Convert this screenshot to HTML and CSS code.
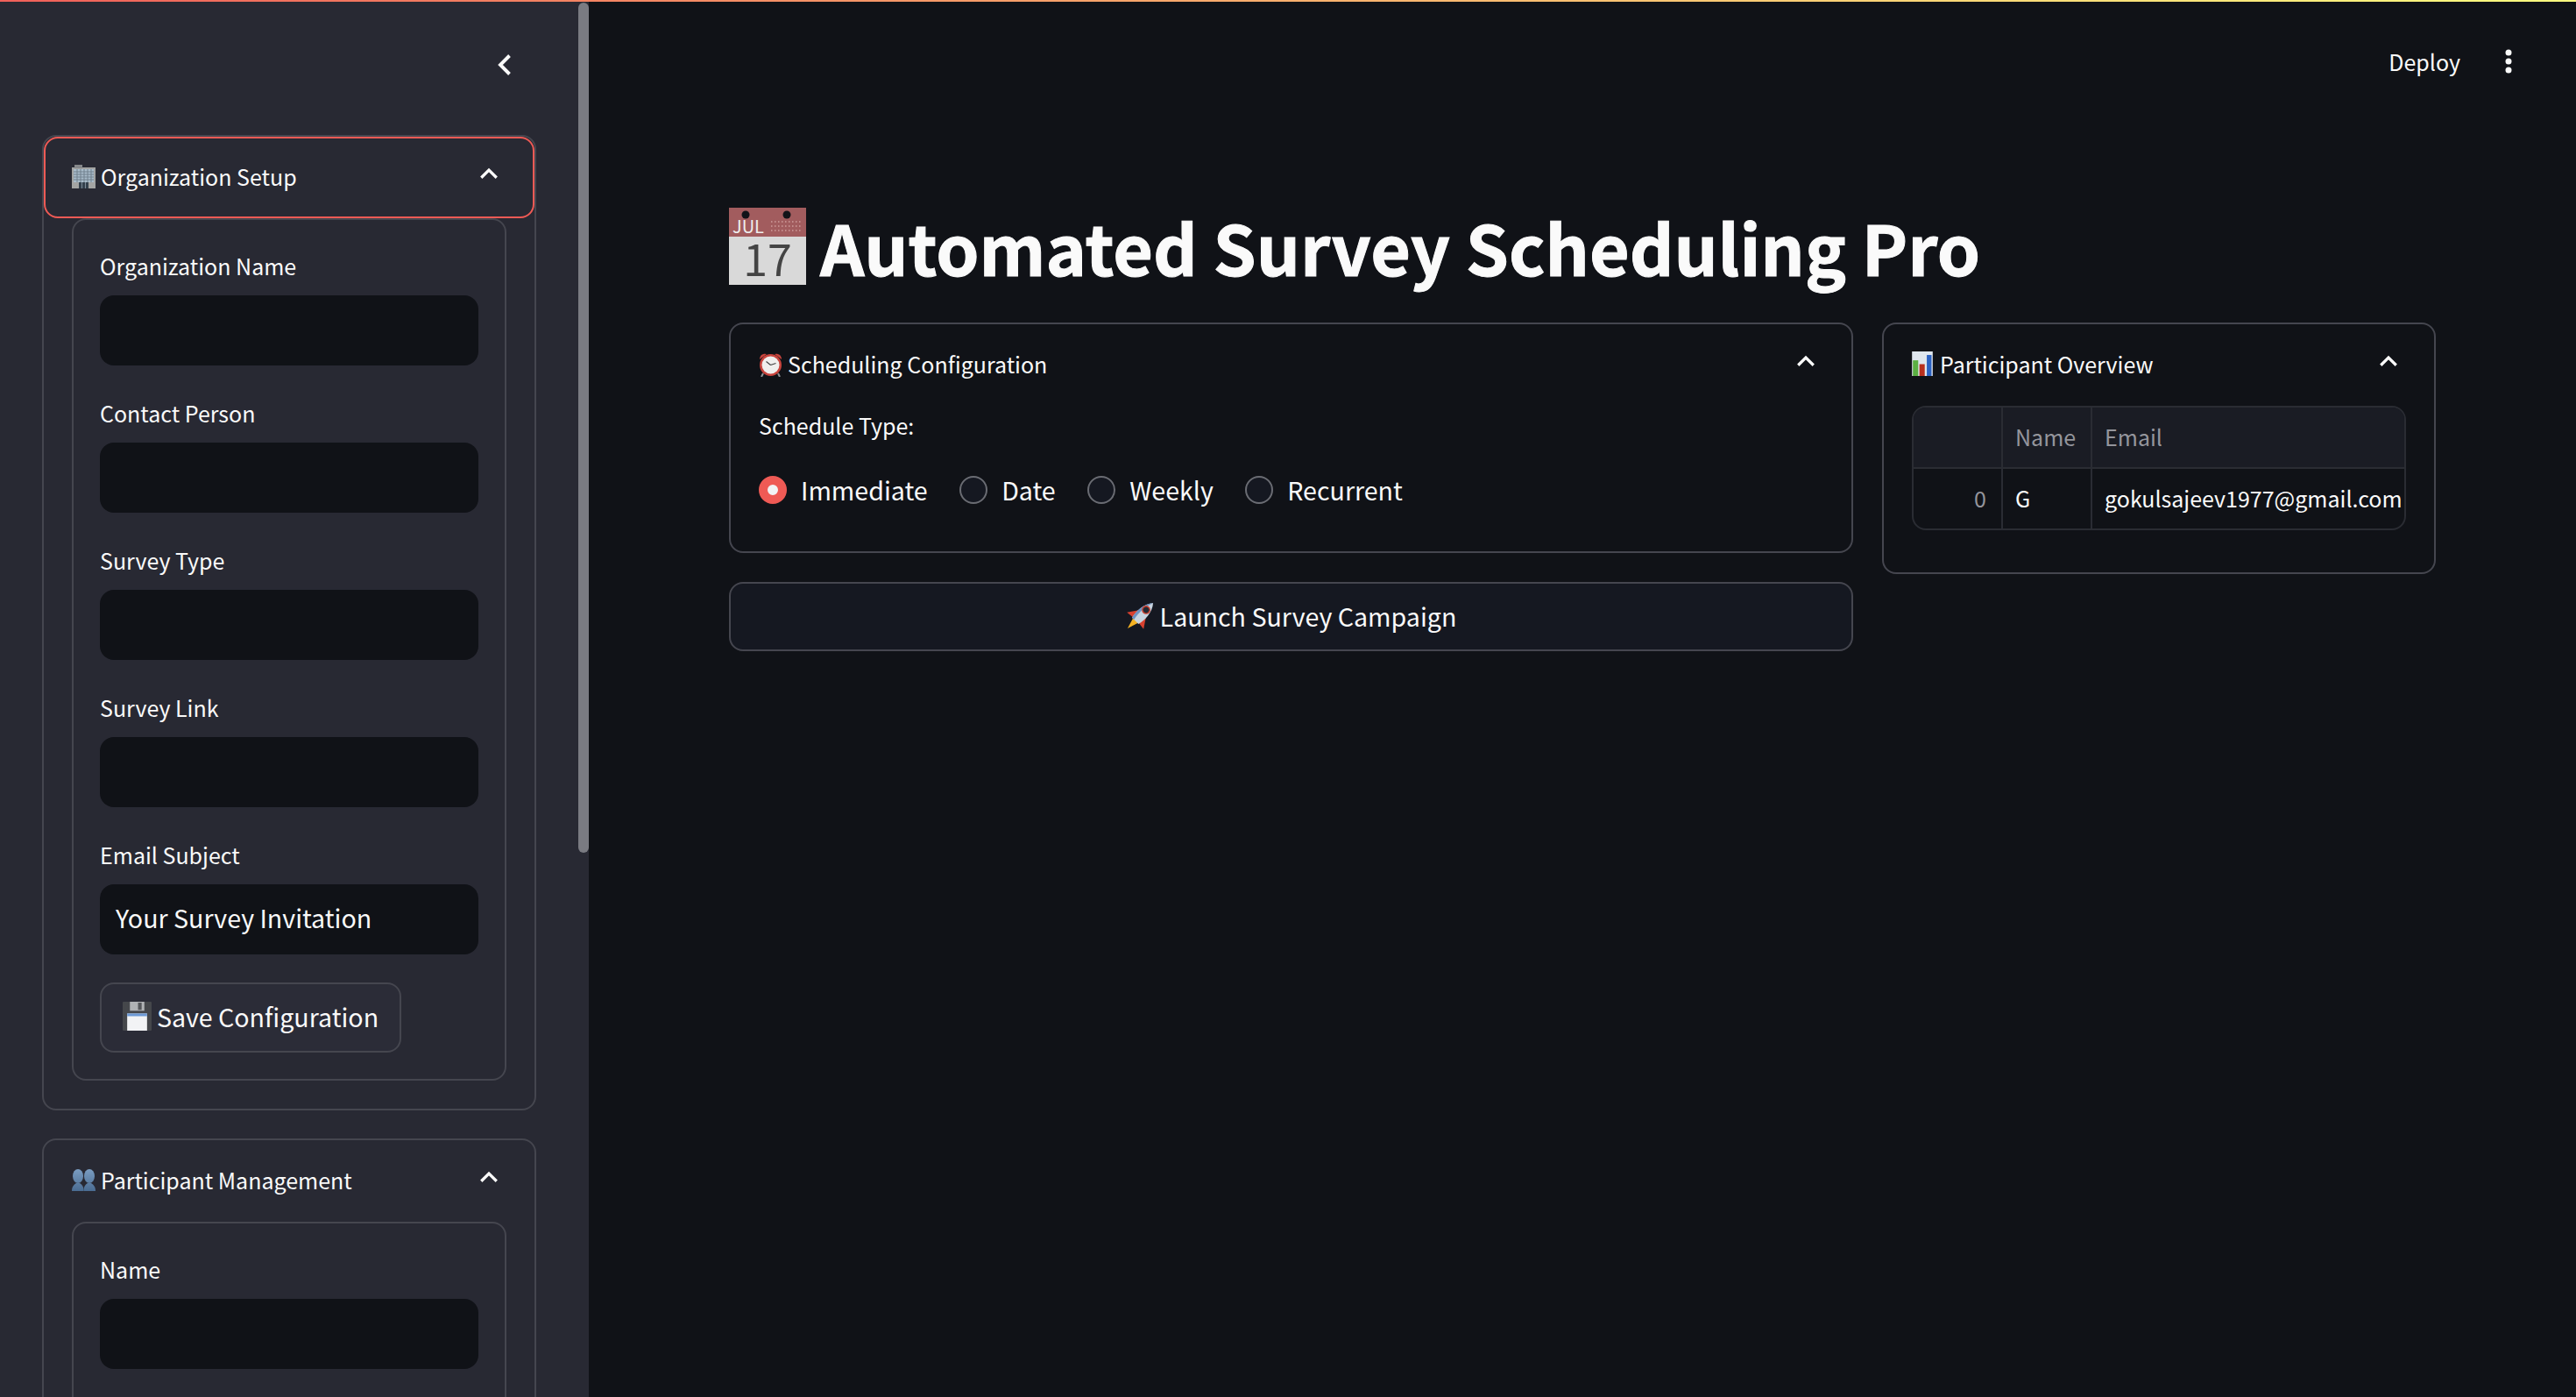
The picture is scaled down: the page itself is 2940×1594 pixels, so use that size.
FILE: index.html
```html
<!DOCTYPE html>
<html lang="en">
<head>
    <meta charset="UTF-8">
    <meta name="viewport" content="width=device-width, initial-scale=1.0">
    <title>Automated Survey Scheduling Pro</title>
    <link rel="stylesheet" href="styles.css">
</head>
<body>
    <div class="top-line"></div>
    <div class="app">
        <aside class="sidebar">
            <div class="scroll-thumb"></div>
            <div class="sidebar-head">
                <svg class="collapse" viewBox="0 0 24 24"><path d="M15 5l-7 7 7 7"/></svg>
            </div>

            <section class="expander">
                <div class="exp-head focused">
                    <span class="exp-title">
                        <svg class="emoji" viewBox="0 0 27 27"><rect x="0" y="3" width="27" height="24" fill="#a3a4a3"/><rect x="3" y="0" width="9" height="4" fill="#85878a"/><rect x="2" y="5" width="23" height="15" fill="#a9bccb"/><path d="M2 8h23M2 11h23M2 14h23M2 17h23M6 5v15M10 5v15M14 5v15M18 5v15M22 5v15" stroke="#71808d" stroke-width="1"/><rect x="8" y="20" width="11" height="7" fill="#34414d"/><path d="M11.500 20v7M15.500 20v7" stroke="#7d8b98"/></svg>
                        Organization Setup
                    </span>
                    <svg class="chevron" viewBox="0 0 24 24"><path d="M5 15l7-7 7 7"/></svg>
                </div>
                <div class="form-box">
                    <div class="field"><label>Organization Name</label><div class="input"></div></div>
                    <div class="field"><label>Contact Person</label><div class="input"></div></div>
                    <div class="field"><label>Survey Type</label><div class="input"></div></div>
                    <div class="field"><label>Survey Link</label><div class="input"></div></div>
                    <div class="field"><label>Email Subject</label><div class="input">Your Survey Invitation</div></div>
                    <button class="btn save">
                        <svg class="emoji-lg" viewBox="0 0 32 32"><rect x="0" y="0" width="32" height="32" rx="1" fill="#45474b"/><rect x="8" y="0" width="16" height="10" fill="#b0b2b5"/><rect x="17" y="1" width="4" height="8" fill="#55575b"/><rect x="5" y="13" width="22" height="19" fill="#f2f3f5"/><rect x="5" y="13" width="22" height="3" fill="#6d9ad6"/></svg>
                        Save Configuration
                    </button>
                </div>
            </section>

            <section class="expander">
                <div class="exp-head">
                    <span class="exp-title">
                        <svg class="emoji" viewBox="0 0 27 27">
                            <defs><linearGradient id="person" gradientUnits="userSpaceOnUse" x1="0" y1="0" x2="0" y2="26"><stop offset="0" stop-color="#7c9fc4"/><stop offset="1" stop-color="#4a6c92"/></linearGradient></defs>
                            <g fill="url(#person)">
                                <ellipse cx="7" cy="9" rx="6" ry="8"/>
                                <path d="M0 26c0-5 2-7 5-9h4c3 2 4.500 4 4.500 9z"/>
                                <ellipse cx="20" cy="9" rx="6" ry="8"/>
                                <path d="M13.500 26c0-5 1.500-7 4.500-9h4c3 2 5 4 5 9z"/>
                            </g>
                        </svg>
                        Participant Management
                    </span>
                    <svg class="chevron" viewBox="0 0 24 24"><path d="M5 15l7-7 7 7"/></svg>
                </div>
                <div class="form-box">
                    <div class="field"><label>Name</label><div class="input"></div></div>
                </div>
            </section>
        </aside>

        <main class="main">
            <div class="topbar">
                <span class="deploy">Deploy</span>
                <svg class="kebab" viewBox="0 0 10 32"><circle cx="5" cy="6" r="3.500"/><circle cx="5" cy="16" r="3.500"/><circle cx="5" cy="26" r="3.500"/></svg>
            </div>

            <h1 class="page-title">
                <svg class="calendar" viewBox="0 0 88 88">
                    <rect width="88" height="88" fill="#d9d9d9"/>
                    <rect width="88" height="33" fill="#a25c5e"/>
                    <circle cx="19" cy="8" r="4.500" fill="#111318"/>
                    <circle cx="66" cy="8" r="4.500" fill="#111318"/>
                    <text x="4" y="29" class="cal-month">JUL</text>
                    <path d="M48 16h36M48 21h36M48 26h36" stroke="#cf9d9d" stroke-width="1.500" stroke-dasharray="1.500 2.500"/>
                    <text x="44" y="78" class="cal-day">17</text>
                </svg>
                Automated Survey Scheduling Pro
            </h1>

            <div class="columns">
                <div class="col-left">
                    <section class="expander wide">
                        <div class="exp-head">
                            <span class="exp-title">
                                <svg class="emoji clock" viewBox="0 0 27 29"><path d="M1 9a6 6 0 0 1 8-6zM26 9a6 6 0 0 0-8-6z" fill="#c8443d"/><path d="M5 25l-2 4M22 25l2 4" stroke="#8f9296" stroke-width="2"/><circle cx="13.500" cy="15.500" r="12.500" fill="#c8443d"/><circle cx="13.500" cy="15.500" r="10" fill="#f0efee"/><path d="M13.500 15.500l-5-4M13.500 15.500l6-2" stroke="#444" stroke-width="1.200"/></svg>
                                Scheduling Configuration
                            </span>
                            <svg class="chevron" viewBox="0 0 24 24"><path d="M5 15l7-7 7 7"/></svg>
                        </div>
                        <div class="radio-label">Schedule Type:</div>
                        <div class="radios">
                            <div class="radio-item"><span class="radio on"></span>Immediate</div>
                            <div class="radio-item"><span class="radio"></span>Date</div>
                            <div class="radio-item"><span class="radio"></span>Weekly</div>
                            <div class="radio-item"><span class="radio"></span>Recurrent</div>
                        </div>
                    </section>
                    <button class="btn launch">
                        <svg class="emoji-lg" viewBox="0 0 32 32"><g transform="rotate(45 16 16)"><path d="M11 12L3 24l8-1z" fill="#d8412f"/><path d="M21 12l8 12-8-1z" fill="#d8412f"/><path d="M12 23l4 13 4-13z" fill="#f5b324"/><path d="M16-4c7 8 7 20 5 28H11C9 16 9 4 16-4z" fill="#c8d4e0"/><path d="M16-4C9 4 9 16 11 24h3C12 14 13 4 16-4z" fill="#6f93c2"/><circle cx="16" cy="7" r="4" fill="#222a34" stroke="#c8402f" stroke-width="1.500"/></g></svg>
                        Launch Survey Campaign
                    </button>
                </div>

                <section class="expander overview">
                    <div class="exp-head">
                        <span class="exp-title">
                            <svg class="emoji chart" viewBox="0 0 70 83"><rect width="70" height="83" fill="#dfe6ee"/><rect x="3" y="30" width="18" height="53" fill="#5cb043"/><rect x="25" y="43" width="18" height="40" fill="#b8301f"/><rect x="50" y="12" width="16" height="71" fill="#2b62c4"/></svg>
                            Participant Overview
                        </span>
                        <svg class="chevron" viewBox="0 0 24 24"><path d="M5 15l7-7 7 7"/></svg>
                    </div>
                    <div class="table">
                        <div class="cell head"></div>
                        <div class="cell head">Name</div>
                        <div class="cell head">Email</div>
                        <div class="cell index">0</div>
                        <div class="cell">G</div>
                        <div class="cell">gokulsajeev1977@gmail.com</div>
                    </div>
                </section>
            </div>
        </main>
    </div>
</body>
</html>
```

FILE: styles.css
```css
* {
    box-sizing: border-box;
}
html, body {
    height: 100%;
}
body {
    margin: 0;
    background-color: #101217;
    color: #fafafa;
    font-family: "Noto Sans CJK SC", "Noto Sans", sans-serif;
    overflow: hidden;
}
.top-line {
    position: absolute;
    top: 0;
    left: 0;
    right: 0;
    height: 2px;
    background: linear-gradient(90deg, #f0605a, #fffd80);
    z-index: 5;
}
.app {
    display: flex;
    height: 1594px;
    overflow: hidden;
}

/* sidebar */
.sidebar {
    position: relative;
    flex: 0 0 672px;
    height: 1594px;
    padding: 0 60px 0 48px;
    background-color: #282933;
    overflow: hidden;
}
.scroll-thumb {
    position: absolute;
    top: 3px;
    right: 0;
    width: 12px;
    height: 970px;
    border-radius: 6px;
    background-color: #7a7b82;
}
.sidebar-head {
    display: flex;
    justify-content: flex-end;
    align-items: flex-start;
    height: 154px;
    padding: 56px 17px 0 0;
}
.collapse {
    width: 36px;
    height: 36px;
    fill: none;
    stroke: #fafafa;
    stroke-width: 2.6;
}

/* expanders */
.expander {
    border: 2px solid #45464f;
    border-radius: 16px;
    padding: 0 32px 32px;
    margin-bottom: 32px;
}
.exp-head {
    display: flex;
    justify-content: space-between;
    align-items: center;
    height: 93px;
    margin: 0 -32px;
    padding: 0 32px;
    border-radius: 16px;
    font-size: 25px;
}
.exp-head.focused {
    border: 2px solid #ef5a55;
    padding: 0 30px;
}
.exp-title {
    display: flex;
    align-items: center;
    gap: 6px;
    line-height: 44px;
    padding-bottom: 3px;
}
.emoji {
    width: 27px;
    height: 27px;
    flex: none;
}
.emoji.clock {
    height: 29px;
}
.emoji.chart {
    width: 24px;
    height: 28px;
    margin-right: 2px;
}
.chevron {
    width: 30px;
    height: 30px;
    margin-top: -8px;
    margin-right: 5px;
    fill: none;
    stroke: #fafafa;
    stroke-width: 2.6;
}
.form-box {
    border: 2px solid #45464f;
    border-radius: 16px;
    padding: 30px;
}
.field {
    margin-bottom: 32px;
}
.field label {
    display: block;
    height: 56px;
    font-size: 25px;
    line-height: 44px;
}
.input {
    height: 80px;
    padding: 0 18px;
    border-radius: 16px;
    background-color: #101217;
    font-size: 28.6px;
    line-height: 76px;
}

/* buttons */
.btn {
    display: flex;
    align-items: center;
    justify-content: center;
    gap: 6px;
    height: 80px;
    padding: 0 0 4px;
    border: 2px solid #45464f;
    border-radius: 16px;
    color: #fafafa;
    font-family: inherit;
    font-size: 28.6px;
}
.save {
    width: 344px;
    background-color: #2b2c37;
}
.launch {
    width: 100%;
    height: 79px;
    padding-bottom: 2px;
    background-color: #151821;
}
.emoji-lg {
    width: 33px;
    height: 33px;
    flex: none;
}

/* main */
.main {
    flex: 1;
    padding: 0 160px;
    min-width: 0;
}
.topbar {
    display: flex;
    justify-content: flex-end;
    align-items: center;
    gap: 50px;
    height: 140px;
    margin-right: -88px;
}
.deploy {
    font-size: 25px;
    color: #fafafa;
}
.kebab {
    width: 10px;
    height: 32px;
    fill: #fafafa;
}
.page-title {
    display: flex;
    align-items: center;
    gap: 16px;
    height: 106px;
    margin: 88px 0 34px;
    font-size: 78.8px;
    font-weight: 700;
    line-height: 106px;
    white-space: nowrap;
    -webkit-text-stroke: 1px #fafafa;
}
.calendar {
    width: 88px;
    height: 88px;
    flex: none;
    overflow: visible;
}
.cal-month {
    font-size: 20px;
    font-weight: 400;
    fill: #eee;
    stroke: none;
    -webkit-text-stroke: 0;
}
.cal-day {
    font-size: 50px;
    font-weight: 400;
    fill: #444;
    text-anchor: middle;
    -webkit-text-stroke: 0;
}
.columns {
    display: grid;
    grid-template-columns: 1283fr 632fr;
    gap: 33px;
    align-items: start;
}
.col-left {
    min-width: 0;
}
.wide {
    padding-bottom: 38px;
    margin-bottom: 33px;
}
.overview {
    padding-bottom: 48px;
    margin-bottom: 0;
}
.radio-label {
    height: 56px;
    font-size: 25px;
    line-height: 44px;
}
.radios {
    display: flex;
    align-items: center;
    gap: 36.5px;
    height: 72px;
    padding-top: 8px;
}
.radio-item {
    display: flex;
    align-items: center;
    gap: 16px;
    font-size: 28.6px;
    line-height: 44px;
}
.radio {
    width: 32px;
    height: 32px;
    flex: none;
    border: 2px solid #6a6c73;
    border-radius: 50%;
    background-color: #151821;
}
.radio.on {
    border: 10px solid #ef5a55;
    background-color: #f2f3f5;
}

/* table */
.table {
    display: grid;
    grid-template-columns: 102px 102px 1fr;
    grid-template-rows: 70px 68px;
    border: 2px solid #2a2c33;
    border-radius: 16px;
    overflow: hidden;
    font-size: 25px;
}
.cell {
    display: flex;
    align-items: center;
    padding: 0 14px 3px;
    border-right: 2px solid #2a2c33;
    white-space: nowrap;
    overflow: hidden;
}
.cell:nth-child(3n) {
    border-right: none;
}
.head {
    background-color: #1a1c24;
    border-bottom: 2px solid #2a2c33;
    color: #94959c;
}
.index {
    justify-content: flex-end;
    padding-right: 17px;
    color: #94959c;
}
```
